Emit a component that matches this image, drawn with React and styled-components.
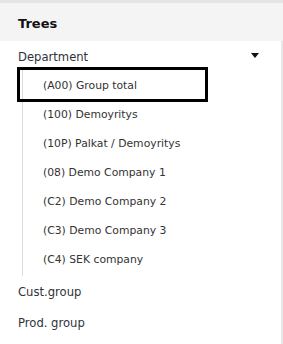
import React from 'react';
import styled, { createGlobalStyle } from 'styled-components';

const GlobalStyle = createGlobalStyle`
    html, body {
        margin: 0;
        padding: 0;
        background-color: #fff;
    }
    body {
        font-family: "DejaVu Sans", Tahoma, sans-serif;
        color: #333;
    }
`;

const Panel = styled.div`
    width: 283px;
    height: 344px;
    border-top: 3px solid #e4e4e4;
    box-sizing: border-box;
    display: flex;
    flex-direction: column;
    overflow: hidden;
`;

const Header = styled.div`
    height: 38px;
    flex-shrink: 0;
    background-color: #f4f4f4;
    display: flex;
    align-items: center;
    padding: 2px 0 0 18px;
    box-sizing: border-box;
    font-size: 13px;
    font-weight: bold;
    color: #111;
`;

const Body = styled.div`
    flex: 1;
    border-right: 2px solid #e8e8e8;
`;

const TreeRow = styled.div`
    height: ${props => props.$height || 29}px;
    box-sizing: border-box;
    display: flex;
    align-items: center;
    justify-content: space-between;
    padding: ${props => props.$height ? '0' : '3px'} 22px 0 18px;
    font-size: 11.6px;
    color: #2f3339;
    cursor: pointer;
`;

const Caret = styled.span`
    width: 0;
    height: 0;
    border-left: 4px solid transparent;
    border-right: 4px solid transparent;
    border-top: 5px solid #111;
    margin: 0 0 3px 0;
`;

const ChildList = styled.ul`
    list-style: none;
    margin: 0 0 0 22px;
    padding: 0 0 3px 0;
    border-left: 1px solid #dcdcdc;
`;

const ChildItem = styled.li`
    height: 29px;
    width: 185px;
    margin: 0 0 0 -3px;
    padding: 2px 0 0 23px;
    box-sizing: border-box;
    display: flex;
    align-items: center;
    font-size: 10.8px;
    color: #333;
    outline: ${props => props.$selected ? '3px solid #000' : 'none'};
    cursor: pointer;
`;

const departments = [
    '(A00) Group total',
    '(100) Demoyritys',
    '(10P) Palkat / Demoyritys',
    '(08) Demo Company 1',
    '(C2) Demo Company 2',
    '(C3) Demo Company 3',
    '(C4) SEK company',
];

const App = () => {
    return (
        <>
            <GlobalStyle />
            <Panel>
                <Header>Trees</Header>
                <Body>
                    <TreeRow>
                        Department
                        <Caret />
                    </TreeRow>
                    <ChildList>
                        {departments.map((name, i) => (
                            <ChildItem key={name} $selected={i === 0}>{name}</ChildItem>
                        ))}
                    </ChildList>
                    <TreeRow $height={31}>Cust.group</TreeRow>
                    <TreeRow $height={31}>Prod. group</TreeRow>
                </Body>
            </Panel>
        </>
    );
};

export default App;
